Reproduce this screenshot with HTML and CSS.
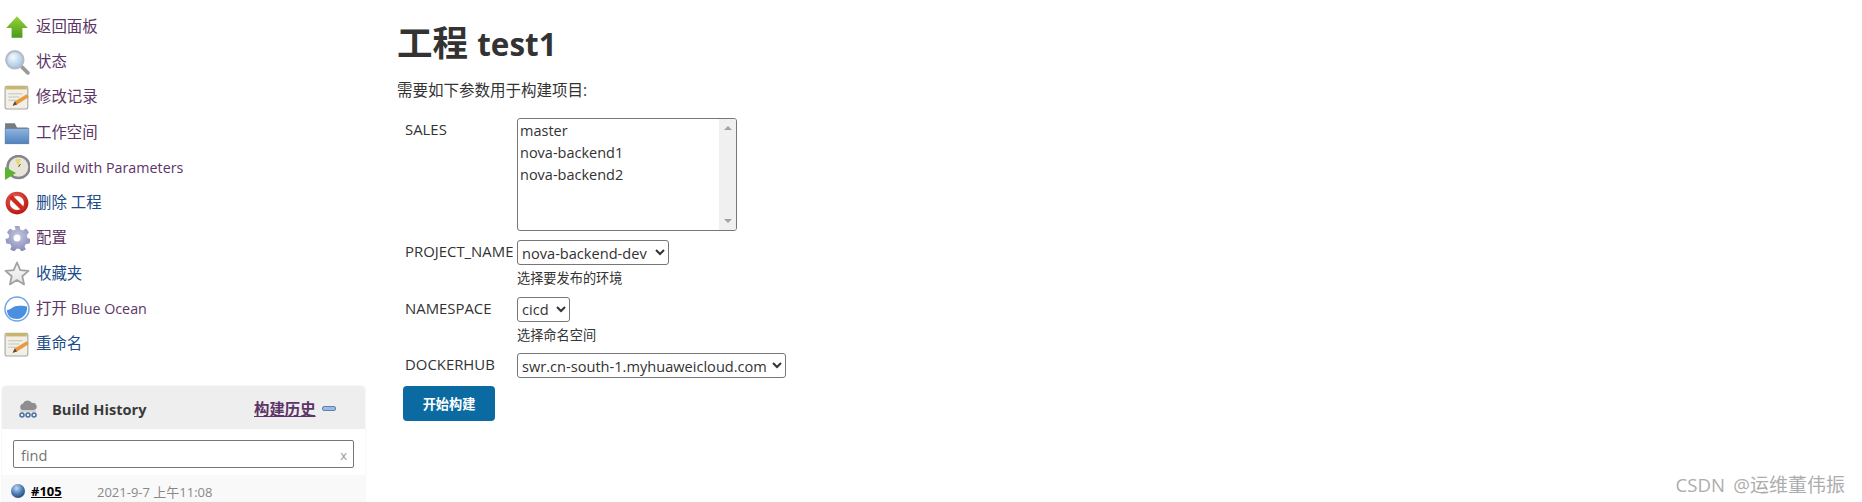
FILE: index.html
```html
<!DOCTYPE html>
<html lang="zh-CN">
  <head>
    <meta charset="UTF-8" />
    <title>工程 test1</title>
    <link rel="stylesheet" href="styles.css">
  </head>

  <body>
    <svg class="defs" width="0" height="0">
      <defs>
        <linearGradient id="g-green" x1="0" y1="0" x2="0" y2="1"><stop offset="0" stop-color="#98d43a"/><stop offset="1" stop-color="#47991a"/></linearGradient>
        <radialGradient id="g-lens" cx="0.4" cy="0.35" r="0.7"><stop offset="0" stop-color="#f4f9fe"/><stop offset="1" stop-color="#9dbfe4"/></radialGradient>
        <linearGradient id="g-folder" x1="0" y1="0" x2="0" y2="1"><stop offset="0" stop-color="#8fb4de"/><stop offset="1" stop-color="#4f82bd"/></linearGradient>
        <radialGradient id="g-red" cx="0.4" cy="0.3" r="0.8"><stop offset="0" stop-color="#f0665c"/><stop offset="1" stop-color="#b81a14"/></radialGradient>
        <radialGradient id="g-gear" cx="0.5" cy="0.4" r="0.7"><stop offset="0" stop-color="#c6c8e2"/><stop offset="1" stop-color="#7d83b0"/></radialGradient>
        <linearGradient id="g-star" x1="0" y1="0" x2="0" y2="1"><stop offset="0" stop-color="#fafafa"/><stop offset="1" stop-color="#e4e4e4"/></linearGradient>
        <radialGradient id="g-ball" cx="0.4" cy="0.3" r="0.75"><stop offset="0" stop-color="#c4d8ee"/><stop offset="0.55" stop-color="#4c7fb8"/><stop offset="1" stop-color="#24466e"/></radialGradient>
        <symbol id="i-notepad" viewBox="0 0 24 24">
          <rect x="1" y="2" width="21" height="21" rx="1.5" fill="#f1efe6" stroke="#a5a5a0"/>
          <rect x="2" y="2" width="19" height="3" fill="#c8b76a"/>
          <path d="M4 9h13M4 12h10M4 15h7" stroke="#c4c4bf"/>
          <path d="M8 20l2-4L21 9.500l2 2.500L12 19z" fill="#e89a3c"/>
          <path d="M8 20l2-4 2 3z" fill="#5a4a38"/>
        </symbol>
      </defs>
    </svg>

    <div class="page">
      <aside class="sidebar">
        <ul class="tasks">
          <li><a class="task visited" href="#">
            <svg class="icon" viewBox="0 0 24 24"><path d="M12 2L22 13H17V22H7V13H2z" fill="url(#g-green)"/></svg>
            返回面板</a></li>
          <li><a class="task visited" href="#">
            <svg class="icon" viewBox="0 0 24 24"><path d="M15 15l7 7" stroke="#9a9a9a" stroke-width="3.500" stroke-linecap="round"/><circle cx="10" cy="10" r="8" fill="url(#g-lens)" stroke="#b5bcc4" stroke-width="2"/></svg>
            状态</a></li>
          <li><a class="task visited" href="#"><svg class="icon"><use href="#i-notepad"/></svg>
            修改记录</a></li>
          <li><a class="task visited" href="#">
            <svg class="icon" viewBox="0 0 24 24"><path d="M1 3h9l2 4h10v15H1z" fill="#767b80"/><rect x="1" y="8" width="22" height="14" fill="url(#g-folder)" stroke="#5d7fa6" stroke-width="0.500"/></svg>
            工作空间</a></li>
          <li><a class="task visited" href="#">
            <svg class="icon" viewBox="0 0 26 26"><circle cx="14.500" cy="12" r="11" fill="#e9e6d8" stroke="#85858f" stroke-width="2.500"/><path d="M14.500 12L11 4.500 17 3.500z" fill="#e8d67c"/><path d="M14.500 12l2-3" stroke="#555"/><path d="M1 12l11 6L1 25z" fill="#58b52c"/></svg>
            <span class="lat">Build with Parameters</span></a></li>
          <li><a class="task" href="#">
            <svg class="icon" viewBox="0 0 24 24"><circle cx="12" cy="12" r="8.500" fill="#fff" stroke="url(#g-red)" stroke-width="4"/><path d="M6 6l12 12" stroke="#cf2a20" stroke-width="4"/></svg>
            删除 工程</a></li>
          <li><a class="task visited" href="#">
            <svg class="icon" viewBox="0 0 26 26"><path d="M10.500 1h5l.8 3.600 2.500 1 3.200-2 3 3.700-2.200 3 .6 2.600 3.100 1-.9 4.700-3.600.3-1.500 2.300 1.300 3.300-4.200 2-2.200-2.800h-2.800l-2.200 2.800-4.200-2 1.300-3.300-1.500-2.300-3.600-.3-.9-4.700 3.100-1 .6-2.600-2.200-3 3-3.700 3.200 2 2.500-1z" fill="url(#g-gear)"/><circle cx="13" cy="13" r="3.500" fill="#fff"/></svg>
            配置</a></li>
          <li><a class="task" href="#">
            <svg class="icon" viewBox="0 0 26 26"><path d="M13 1.500l3.300 7.600 8.200.8-6.200 5.400 1.800 8.100-7.100-4.300-7.100 4.300 1.800-8.100-6.200-5.400 8.200-.8z" fill="url(#g-star)" stroke="#a2a2a2" stroke-width="1.800" stroke-linejoin="round"/></svg>
            收藏夹</a></li>
          <li><a class="task visited" href="#">
            <svg class="icon" viewBox="0 0 26 26"><circle cx="13" cy="13" r="12" fill="#fff" stroke="#6fa6e6" stroke-width="1.500"/><path d="M3 14c4 0 5-3.500 10-4 4-.4 6-.5 10 .5 1 5-3 12.500-10 12.500S3 19 3 14z" fill="#4b8fe0"/></svg>
            <span>打开 <span class="lat">Blue Ocean</span></span></a></li>
          <li><a class="task" href="#"><svg class="icon"><use href="#i-notepad"/></svg>
            重命名</a></li>
        </ul>

        <section class="history">
          <header class="history-head">
            <svg class="history-icon" viewBox="0 0 20 20"><path d="M4 11a3.500 3.500 0 0 1 1-6.500A5 5 0 0 1 14 4a3.500 3.500 0 0 1 2 7z" fill="#8e8e8e"/><path d="M2 12h16" stroke="#bbb"/><g fill="none" stroke="#47709f" stroke-width="1.500"><circle cx="4" cy="16" r="2"/><circle cx="10" cy="16" r="2"/><circle cx="16" cy="16" r="2"/></g></svg>
            <span class="history-title">Build History</span>
            <a class="history-link" href="#">构建历史</a>
            <span class="collapse"></span>
          </header>
          <div class="history-filter">
            <div class="find-box"><span>find</span><span class="find-clear">x</span></div>
          </div>
          <div class="build-row">
            <svg class="ball" viewBox="0 0 14 14"><circle cx="7" cy="7" r="7" fill="url(#g-ball)"/></svg>
            <a class="build-num" href="#">#105</a>
            <span class="build-date">2021-9-7 上午11:08</span>
          </div>
        </section>
      </aside>

      <main class="main">
        <h1>工程 <span class="h1-lat">test1</span></h1>
        <p class="intro">需要如下参数用于构建项目:</p>
        <form class="params">
          <div class="param-name">SALES</div>
          <div class="listbox">
            <div class="listbox-items">
              <div>master</div>
              <div>nova-backend1</div>
              <div>nova-backend2</div>
            </div>
            <div class="listbox-bar">
              <span class="arrow-up"></span>
              <span class="arrow-down"></span>
            </div>
          </div>

          <div class="param-name">PROJECT_NAME</div>
          <div class="param-value">
            <select class="sel-project"><option>nova-backend-dev</option></select>
            <div class="param-desc">选择要发布的环境</div>
          </div>

          <div class="param-name">NAMESPACE</div>
          <div class="param-value">
            <select class="sel-namespace"><option>cicd</option></select>
            <div class="param-desc">选择命名空间</div>
          </div>

          <div class="param-name">DOCKERHUB</div>
          <div class="param-value">
            <select class="sel-docker"><option>swr.cn-south-1.myhuaweicloud.com</option></select>
          </div>

          <div class="actions">
            <button type="button" class="build-btn">开始构建</button>
          </div>
        </form>
      </main>
    </div>

    <div class="watermark"><span class="wm-lat">CSDN @</span>运维董伟振</div>
  </body>
</html>
```

FILE: styles.css
```css
html,
body {
  height: 100%;
}

body {
  margin: 0;
  overflow: hidden;
  background: #fff;
  color: #333;
  font-family: "Open Sans", "Noto Sans CJK SC", sans-serif;
  font-size: 15.4px;
}

a {
  color: #204a87;
  text-decoration: none;
}

.defs {
  display: block;
  height: 0;
}

.page {
  display: flex;
}

.sidebar {
  width: 365px;
  padding: 9px 0 0 2px;
  box-sizing: border-box;
  flex-shrink: 0;
}

.tasks {
  list-style: none;
  margin: 0;
  padding: 0;
}

.task {
  display: flex;
  align-items: center;
  gap: 6px;
  height: 35.3px;
  line-height: 20px;
  white-space: nowrap;
}

.task.visited {
  color: #5c3566;
}

.lat {
  font-size: 14.3px;
}

.icon {
  width: 26px;
  height: 26px;
  flex-shrink: 0;
  margin-left: 2px;
}

.history {
  margin-top: 24px;
  width: 363px;
  border-radius: 4px 4px 0 0;
  box-shadow: 0 0 2px #e4e4e4;
}

.history-head {
  display: flex;
  align-items: center;
  height: 43px;
  padding: 3px 0 0 16px;
  box-sizing: border-box;
  background: #eee;
  border-radius: 4px 4px 0 0;
}

.history-icon {
  width: 20px;
  height: 20px;
  margin-right: 14px;
}

.history-title {
  font-size: 14.6px;
  font-weight: 700;
  width: 202px;
  color: #3a3a3a;
}

.history-link {
  color: #5c3566;
  font-size: 15.4px;
  font-weight: 600;
  text-decoration: underline;
}

.collapse {
  width: 14px;
  height: 5px;
  margin-left: 6px;
  background: #9dbbe0;
  border: 1px solid #5c83b8;
  border-radius: 2px;
  box-sizing: border-box;
}

.history-filter {
  padding: 11px 11px 7px;
}

.find-box {
  display: flex;
  justify-content: space-between;
  align-items: center;
  height: 28px;
  padding: 2px 6px 0 7px;
  border: 1px solid #767676;
  border-radius: 2px;
  box-sizing: border-box;
  color: #757575;
  font-size: 14.6px;
}

.find-clear {
  color: #999;
  font-size: 13px;
}

.build-row {
  display: flex;
  align-items: center;
  height: 27px;
  padding: 3px 0 0 9px;
  background: #f9f9f9;
}

.ball {
  width: 14px;
  height: 14px;
  margin-right: 6px;
}

.build-num {
  width: 66px;
  color: #000;
  font-size: 13px;
  font-weight: 700;
  text-decoration: underline;
}

.build-date {
  color: #888;
  font-size: 13px;
}

.main {
  padding: 0 0 0 32px;
}

h1 {
  margin: 19px 0 0;
  font-size: 35.5px;
  line-height: 46px;
  height: 46px;
  font-weight: 700;
  color: #333;
}

.h1-lat {
  font-size: 31.4px;
}

.intro {
  margin: 15px 0 0;
  font-size: 15.5px;
  line-height: 20px;
}

.params {
  display: grid;
  grid-template-columns: 112px auto;
  justify-content: start;
  margin: 18px 0 0 8px;
}

.param-name {
  padding-top: 1px;
  font-size: 14.9px;
  line-height: 20px;
  white-space: nowrap;
}

.param-value {
  padding-bottom: 8.5px;
}

.listbox {
  display: flex;
  width: 220px;
  height: 113px;
  margin-bottom: 9px;
  border: 1px solid #767676;
  border-radius: 3px;
  box-sizing: border-box;
  overflow: hidden;
}

.listbox-items {
  flex: 1;
  padding: 1px 0 0 2px;
  font-size: 14.5px;
  line-height: 22px;
}

.listbox-bar {
  display: flex;
  flex-direction: column;
  justify-content: space-between;
  align-items: center;
  width: 17px;
  padding: 7px 0;
  box-sizing: border-box;
  background: #f0f0f0;
}

.arrow-up,
.arrow-down {
  width: 0;
  height: 0;
  border-left: 4px solid transparent;
  border-right: 4px solid transparent;
}

.arrow-up {
  border-bottom: 4px solid #a3a3a3;
}

.arrow-down {
  border-top: 4px solid #a3a3a3;
}

select {
  display: block;
  height: 25px;
  padding: 0;
  background: #fff;
  color: #333;
  border: 1px solid #767676;
  border-radius: 3px;
  font-family: "Open Sans", "Noto Sans CJK SC", sans-serif;
  font-size: 14.6px;
}

.sel-project {
  width: 152px;
}

.sel-namespace {
  width: 53px;
}

.sel-docker {
  width: 269px;
}

.param-desc {
  margin: 4px 0 1px;
  font-size: 13.2px;
  line-height: 18px;
}

.actions {
  grid-column: 1 / -1;
  margin-top: -1px;
}

.build-btn {
  display: block;
  width: 92px;
  height: 35px;
  margin-left: -2px;
  background: #0b6aa2;
  color: #fff;
  border: none;
  border-radius: 4px;
  font-family: "Open Sans", "Noto Sans CJK SC", sans-serif;
  font-size: 13.2px;
  font-weight: 700;
}

.watermark {
  position: absolute;
  right: 17px;
  top: 473px;
  color: #adadad;
  font-size: 19px;
  line-height: 24px;
}

.wm-lat {
  font-size: 18.6px;
  word-spacing: 3.5px;
}
```
